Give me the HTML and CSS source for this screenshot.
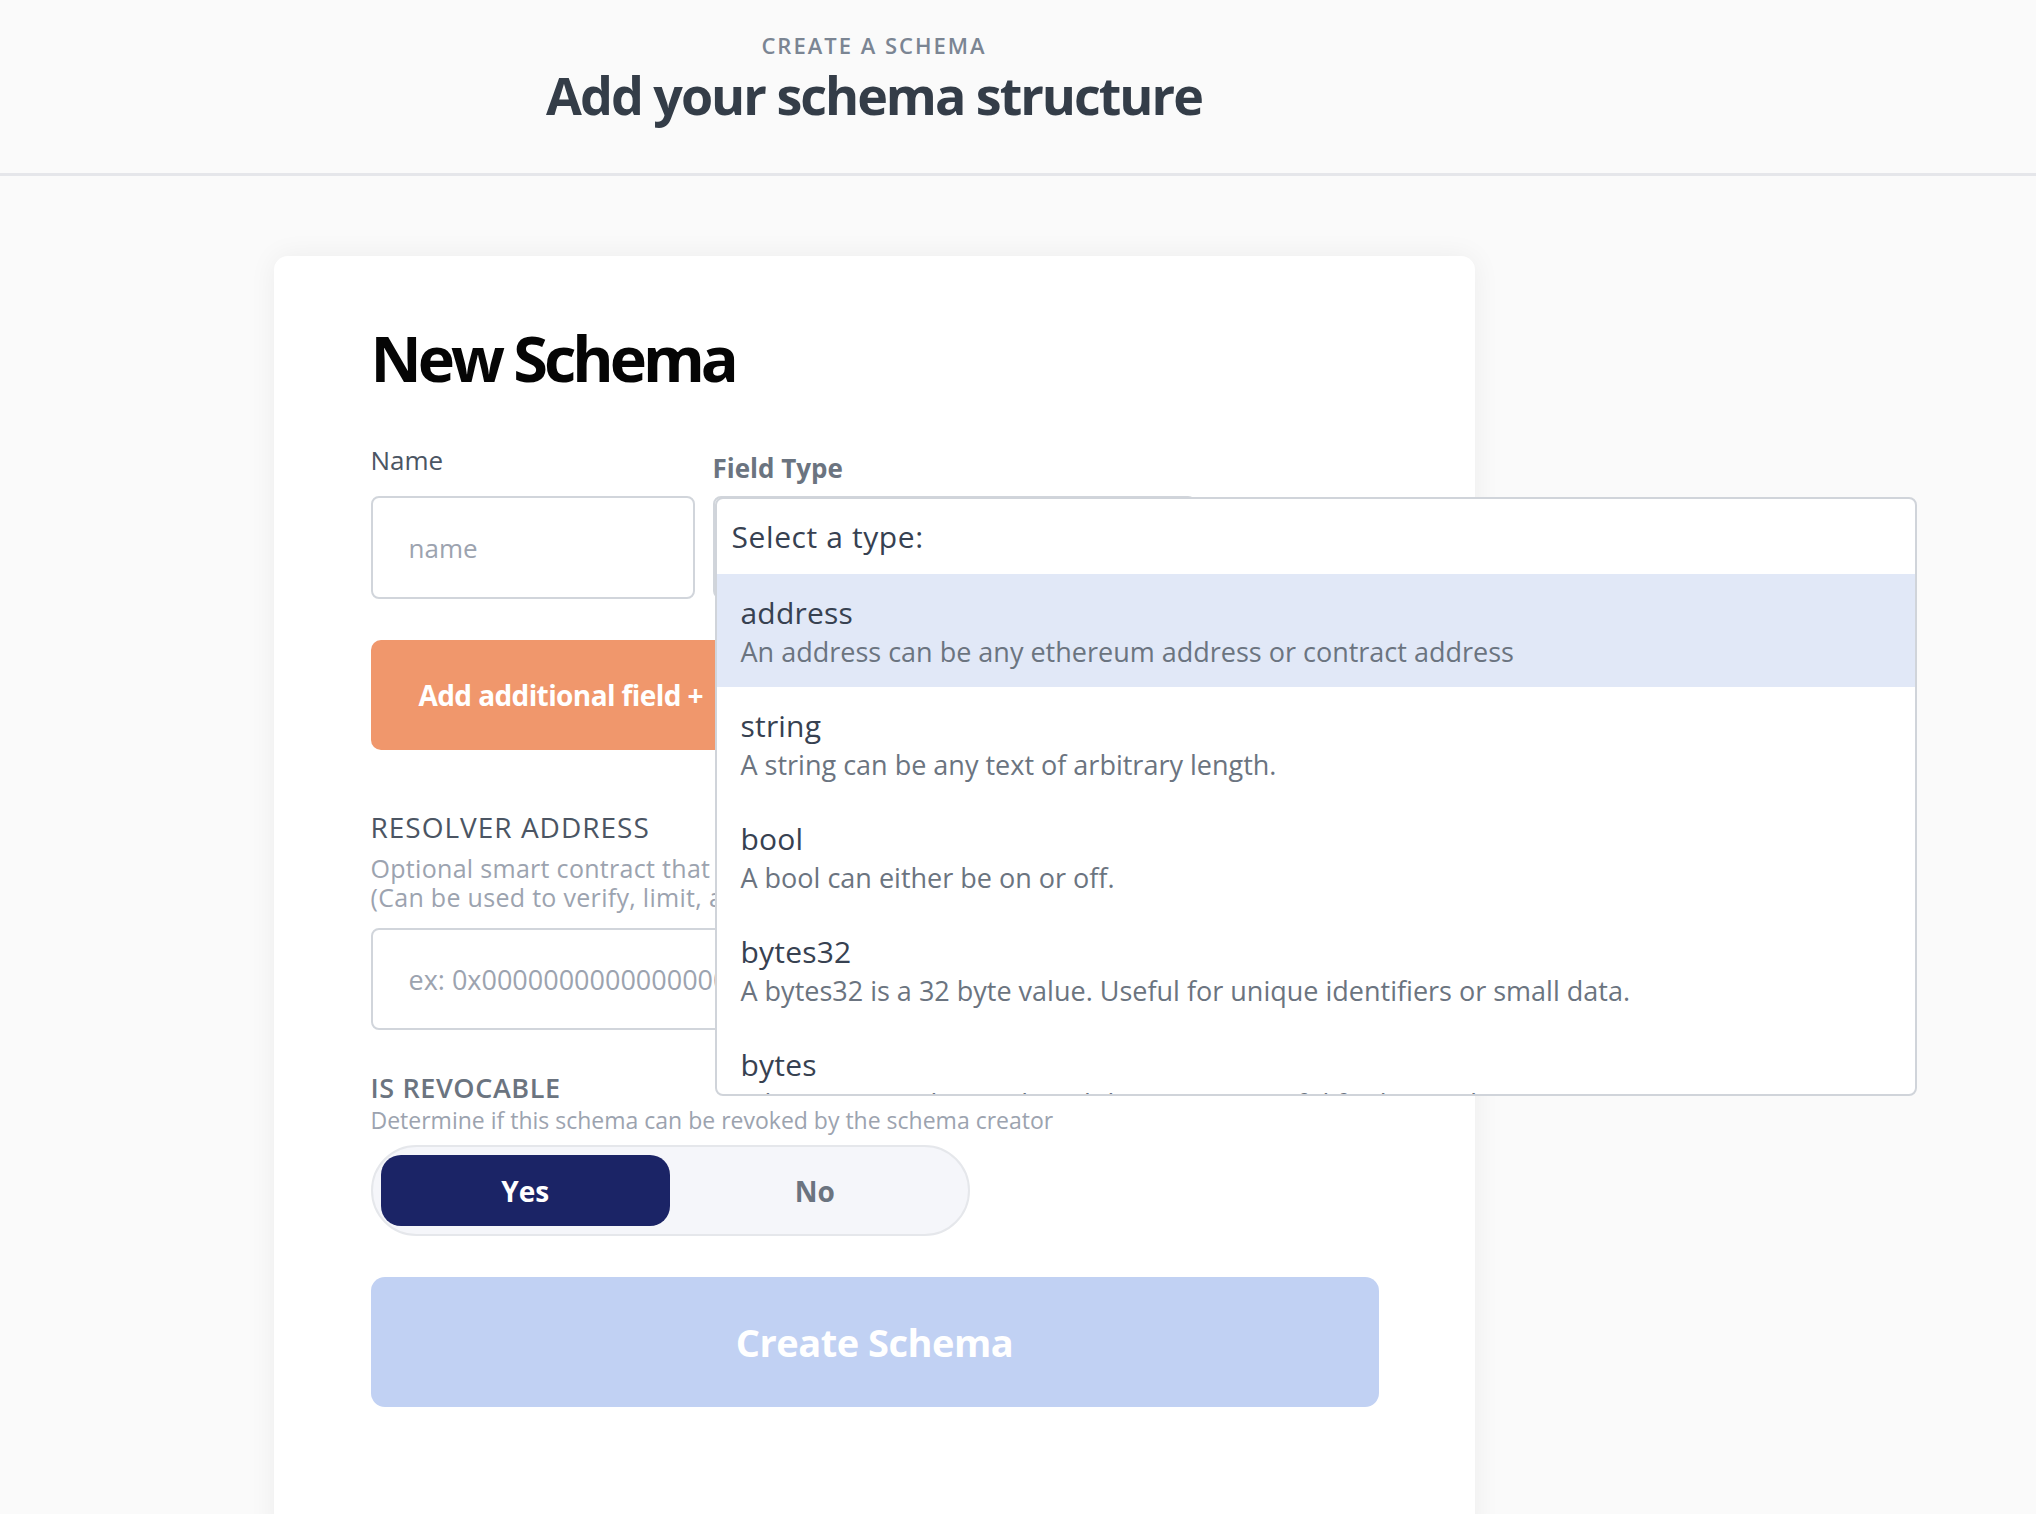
FILE: index.html
```html
<!DOCTYPE html>
<html lang="en">
<head>
<meta charset="utf-8">
<title>Create a schema</title>
<link rel="stylesheet" href="styles.css">
</head>
<body>
<header class="top">
  <div class="top-inner">
    <p class="eyebrow">Create a schema</p>
    <h1 class="page-title">Add your schema structure</h1>
  </div>
</header>
<main class="main">
  <section class="card">
    <h2 class="card-title">New Schema</h2>
    <div class="field-row">
      <div class="field name-field">
        <label class="label">Name</label>
        <div class="text-input"><span class="placeholder">name</span></div>
      </div>
      <div class="field type-field">
        <label class="label label-strong">Field Type</label>
        <div class="select-box">
          <div class="dropdown">
            <div class="dropdown-head">Select a type:</div>
            <ul class="options">
              <li class="option is-active">
                <div class="opt-title">address</div>
                <div class="opt-desc">An address can be any ethereum address or contract address</div>
              </li>
              <li class="option">
                <div class="opt-title">string</div>
                <div class="opt-desc">A string can be any text of arbitrary length.</div>
              </li>
              <li class="option">
                <div class="opt-title">bool</div>
                <div class="opt-desc">A bool can either be on or off.</div>
              </li>
              <li class="option">
                <div class="opt-title">bytes32</div>
                <div class="opt-desc">A bytes32 is a 32 byte value. Useful for unique identifiers or small data.</div>
              </li>
              <li class="option">
                <div class="opt-title">bytes</div>
                <div class="opt-desc">A bytes is an arbitrary length byte array. Useful for larger data.</div>
              </li>
              <li class="option">
                <div class="opt-title">uint256</div>
                <div class="opt-desc">A uint256 is an unsigned integer value.</div>
              </li>
            </ul>
          </div>
        </div>
      </div>
    </div>
    <button class="add-btn">Add additional field +</button>

    <div class="block resolver">
      <h3 class="section-label">Resolver address</h3>
      <p class="hint">Optional smart contract that gets executed with every attestation of this type.<br>(Can be used to verify, limit, act upon any attestation)</p>
      <div class="text-input wide"><span class="placeholder">ex: 0x0000000000000000000000000000000000000000</span></div>
    </div>

    <div class="block revocable">
      <h3 class="section-label strong">Is revocable</h3>
      <p class="hint small">Determine if this schema can be revoked by the schema creator</p>
      <div class="toggle">
        <span class="toggle-opt on">Yes</span>
        <span class="toggle-opt">No</span>
      </div>
    </div>

    <button class="create-btn">Create Schema</button>
  </section>
</main>
</body>
</html>
```

FILE: styles.css
```css
* { box-sizing: border-box; }
html, body { margin: 0; padding: 0; }
body {
  background: #fafafa;
  font-family: "Open Sans", "Noto Sans", sans-serif;
  color: #374151;
  overflow: hidden;
  height: 1514px;
}

.top {
  border-bottom: 3px solid #e5e6ea;
  background: #fafafa;
}
.top-inner {
  width: 1748px;
  text-align: center;
  padding: 30px 0 47px;
}
.eyebrow {
  margin: 0 0 4px;
  font-size: 22px;
  line-height: 30px;
  font-weight: 600;
  text-transform: uppercase;
  letter-spacing: 2px;
  color: #7b8593;
}
.page-title {
  margin: 0;
  font-size: 52px;
  line-height: 62px;
  font-weight: 700;
  letter-spacing: -2px;
  color: #343d48;
}

.main {
  width: 1748px;
  display: flex;
  justify-content: center;
  padding-top: 80px;
}
.card {
  width: 1201px;
  background: #fff;
  border-radius: 14px;
  box-shadow: 0 0 28px rgba(0, 0, 0, 0.06);
  padding: 70px 96px 140px 97px;
}
.card-title {
  margin: 0;
  font-size: 63px;
  line-height: 63px;
  font-weight: 700;
  letter-spacing: -4px;
  color: #050505;
}

.field-row {
  display: flex;
  align-items: flex-start;
  gap: 18px;
  margin-top: 55px;
}
.field { display: flex; flex-direction: column; }
.name-field { width: 324px; }
.type-field { width: 483px; position: relative; }
.label {
  display: block;
  font-size: 26px;
  line-height: 32px;
  color: #4b5563;
  margin-bottom: 20px;
}
.label-strong {
  font-weight: 700;
  color: #6b7480;
  margin-top: 8px;
  margin-bottom: 12px;
}
.text-input {
  height: 103px;
  border: 2px solid #d1d5db;
  border-radius: 8px;
  background: #fff;
  display: flex;
  align-items: center;
  padding-left: 36px;
  white-space: nowrap;
  overflow: hidden;
}
.text-input.wide { width: 1008px; height: 102px; }
.placeholder {
  font-size: 26px;
  color: #9ca3af;
}
.wide .placeholder { font-size: 27px; }
.select-box {
  position: relative;
  height: 103px;
  border: 2px solid #d1d5db;
  border-radius: 8px;
  background: #fff;
}

.dropdown {
  position: absolute;
  left: 0;
  top: -1px;
  width: 1202px;
  height: 599px;
  background: #fff;
  border: 2px solid #d0d4da;
  border-radius: 8px;
  overflow: hidden;
  z-index: 10;
}
.dropdown-head {
  height: 75px;
  line-height: 75px;
  padding-left: 15px;
  font-size: 30px;
  letter-spacing: 0.6px;
  color: #374151;
}
.options { list-style: none; margin: 0; padding: 0; }
.option {
  height: 113px;
  padding: 19px 24px 16px;
}
.option.is-active { background: #e1e8f7; }
.opt-title {
  font-size: 30px;
  line-height: 40px;
  letter-spacing: 0.2px;
  color: #374151;
}
.opt-desc {
  font-size: 27px;
  line-height: 38px;
  color: #6b7480;
  white-space: nowrap;
}

.add-btn {
  display: block;
  margin-top: 41px;
  height: 110px;
  padding: 0 48px;
  border: 0;
  border-radius: 10px;
  background: #f0976c;
  color: #fff;
  font-family: inherit;
  font-size: 28px;
  font-weight: 700;
  letter-spacing: -0.6px;
}

.resolver { margin-top: 60px; }
.section-label {
  margin: 0;
  font-size: 28px;
  line-height: 34px;
  font-weight: 400;
  letter-spacing: 1px;
  text-transform: uppercase;
  color: #4b5563;
}
.hint {
  margin: 10px 0 16px;
  font-size: 25px;
  line-height: 29px;
  letter-spacing: 0.3px;
  color: #9ca3af;
  white-space: nowrap;
}

.revocable { margin-top: 42px; }
.section-label.strong {
  font-size: 27px;
  line-height: 32px;
  font-weight: 600;
  letter-spacing: 0.6px;
  color: #6b7480;
}
.hint.small {
  margin: 2px 0 11px;
  font-size: 23px;
  line-height: 28px;
  letter-spacing: 0;
}

.toggle {
  width: 599px;
  height: 91px;
  border: 2px solid #e5e7eb;
  border-radius: 46px;
  background: #f5f6fa;
  padding: 8px;
  display: flex;
}
.toggle-opt {
  flex: 1;
  display: flex;
  align-items: center;
  justify-content: center;
  border-radius: 20px;
  font-size: 28px;
  font-weight: 700;
  color: #6b7480;
}
.toggle-opt.on {
  background: #1b2466;
  color: #fff;
}

.create-btn {
  display: block;
  width: 1008px;
  height: 130px;
  margin-top: 41px;
  border: 0;
  border-radius: 14px;
  background: #c1d1f3;
  color: #fff;
  font-family: inherit;
  font-size: 38px;
  font-weight: 700;
  letter-spacing: -0.5px;
}
```
